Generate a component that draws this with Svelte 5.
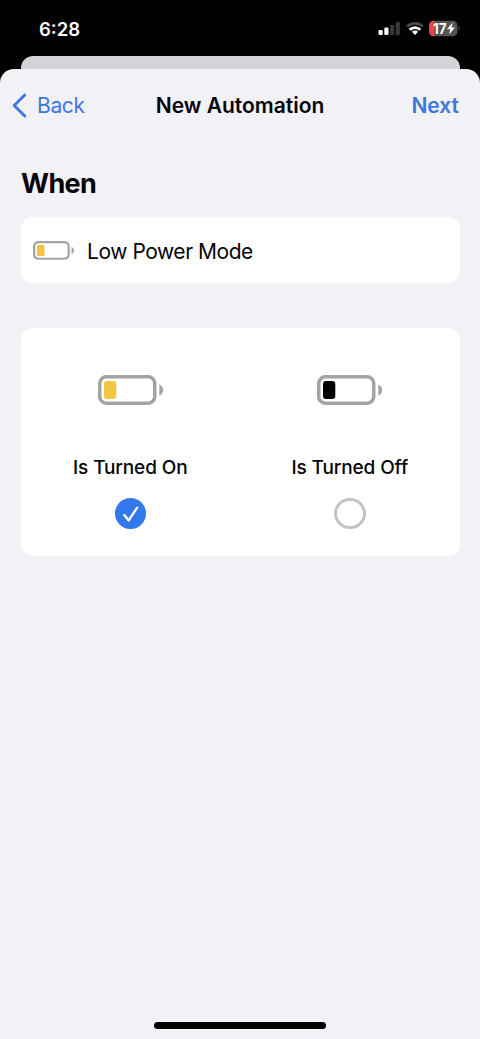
<script lang="ts">
    const options = [
        { label: 'Is Turned On', level: '#f2c643' },
        { label: 'Is Turned Off', level: '#000000' }
    ];
    let selected = $state(0);
</script>

{#snippet battery(level: string)}
    <svg class="battery" viewBox="0 0 66 30" fill="none">
        <rect x="1.75" y="1.75" width="55" height="26.5" rx="6.6" stroke="#a3a3a4" stroke-width="3.5" />
        <rect x="6" y="6" width="12.3" height="18" rx="3" fill={level} />
        <path d="M61.3 9.4C63.8 10.3 65.2 12.5 65.2 15s-1.4 4.7-3.9 5.6Z" fill="#a3a3a4" />
    </svg>
{/snippet}

<div class="phone">
    <header class="status">
        <span class="time">6:28</span>
        <svg class="indicators" viewBox="0 0 84 20" fill="none">
            <g fill="#ffffff">
                <rect x="2.5" y="12" width="4.2" height="5" rx="1.1" />
                <rect x="8.3" y="9.6" width="4.2" height="7.4" rx="1.1" />
                <rect x="14.1" y="6.9" width="4.2" height="10.1" rx="1.1" fill="#39393b" />
                <rect x="19.7" y="4" width="4.2" height="13" rx="1.1" fill="#39393b" />
            </g>
            <path d="M31.2 8.5a11.4 11.4 0 0 1 15.6 0" stroke="#4a4a4c" stroke-width="2.7" />
            <path d="M33.7 11.8a7.6 7.6 0 0 1 10.6 0" stroke="#ffffff" stroke-width="2.9" />
            <path d="M36 13.8a4.2 4.2 0 0 1 6 0L39 16.9Z" fill="#ffffff" />
            <rect x="53.2" y="2.7" width="28.2" height="15.6" rx="4.6" fill="#545456" />
            <path d="M58.6 2.7h-.8a4.6 4.6 0 0 0-4.6 4.6v6.4a4.6 4.6 0 0 0 4.6 4.6h.8Z" fill="#e5484a" />
            <path d="M82.6 8.2c1.5.6 1.5 4 0 4.6Z" fill="#545456" />
            <text x="57" y="15.6" textLength="13.6" lengthAdjust="spacingAndGlyphs">17</text>
            <path d="m76.8 4.6-6 6.7h3.6l-1.4 5.2 6.1-6.9h-3.6Z" fill="#ffffff" />
        </svg>
    </header>

    <div class="sheet-behind"></div>

    <main class="sheet">
        <nav>
            <button class="back">
                <svg class="chevron" viewBox="0 0 15 25" fill="none">
                    <path d="M12.8 2 2.2 12.5 12.8 23" stroke="#3b78e0" stroke-width="2.9" stroke-linecap="round" stroke-linejoin="round" />
                </svg>
                <span class="back-label">Back</span>
            </button>
            <h1>New Automation</h1>
            <button class="next">Next</button>
        </nav>

        <h2>When</h2>

        <section class="card trigger">
            <div class="trigger-icon">{@render battery('#f2c643')}</div>
            <span class="trigger-label">Low Power Mode</span>
        </section>

        <section class="card options">
            {#each options as option, i}
                <button class="option" onclick={() => (selected = i)}>
                    <div class="option-icon">{@render battery(option.level)}</div>
                    <span class="option-label">{option.label}</span>
                    <span class="radio" class:checked={selected === i}>
                        {#if selected === i}
                            <svg viewBox="0 0 32 32" fill="none">
                                <path d="m9.4 17.2 4.5 5.6 8.6-13" stroke="#ffffff" stroke-width="2.4" stroke-linecap="round" stroke-linejoin="round" />
                            </svg>
                        {/if}
                    </span>
                </button>
            {/each}
        </section>

        <div class="home-indicator"></div>
    </main>
</div>

<style>
    :global(body) {
        margin: 0;
        background: #000000;
    }

    .phone {
        width: 480px;
        height: 1039px;
        display: flex;
        flex-direction: column;
        overflow: hidden;
        background: #000000;
        color: #050506;
        font-family: Inter, 'Liberation Sans', sans-serif;
    }

    button {
        padding: 0;
        border: none;
        background: none;
        color: inherit;
        font: inherit;
        cursor: pointer;
    }

    svg {
        display: block;
        overflow: visible;
    }

    h1,
    h2 {
        margin: 0;
    }

    .status {
        box-sizing: border-box;
        height: 56px;
        padding: 18px 20px 0 39px;
        display: flex;
        justify-content: space-between;
        color: #ffffff;
    }

    .time {
        font-size: 18.5px;
        font-weight: 600;
        line-height: 22px;
    }

    .indicators {
        width: 84px;
        height: 20px;
    }

    .indicators text {
        fill: #ffffff;
        font-size: 14px;
        font-weight: 700;
    }

    .sheet-behind {
        height: 13px;
        margin: 0 20.5px;
        border-radius: 12px 12px 0 0;
        background: #d4d4d8;
    }

    .sheet {
        flex: 1;
        display: flex;
        flex-direction: column;
        border-radius: 14px 14px 0 0;
        background: #f1f1f6;
    }

    nav {
        height: 72px;
        padding: 0 21px 0 11.5px;
        display: grid;
        grid-template-columns: 120.5px 1fr 111px;
        align-items: center;
        font-size: 21px;
    }

    .back {
        display: flex;
        align-items: center;
        gap: 10.5px;
        color: #3b78e0;
        letter-spacing: -0.35px;
    }

    .chevron {
        width: 15px;
        height: 25px;
    }

    h1 {
        text-align: center;
        white-space: nowrap;
        font-size: 21px;
        font-weight: 600;
    }

    .next {
        text-align: right;
        color: #3b78e0;
        font-weight: 600;
    }

    h2 {
        height: 76px;
        padding-left: 21px;
        line-height: 85px;
        font-size: 27px;
        font-weight: 700;
        letter-spacing: -0.6px;
    }

    .card {
        margin: 0 20.5px;
        border-radius: 12px;
        background: #ffffff;
    }

    .trigger {
        height: 66px;
        display: flex;
        align-items: center;
        gap: 12.5px;
        padding-left: 12.5px;
    }

    .trigger-icon {
        width: 41.5px;
    }

    .trigger-label {
        padding-top: 2px;
        font-size: 21px;
        letter-spacing: -0.45px;
    }

    .options {
        height: 228px;
        margin-top: 45px;
        display: grid;
        grid-template-columns: 1fr 1fr;
    }

    .option {
        display: flex;
        flex-direction: column;
        align-items: center;
    }

    .option-icon {
        width: 66px;
        margin: 47px 0 0 1px;
    }

    .option-label {
        margin-top: 50px;
        font-size: 19px;
        font-weight: 500;
        line-height: 26px;
        letter-spacing: -0.12px;
    }

    .radio {
        box-sizing: border-box;
        width: 31.5px;
        height: 31.5px;
        margin-top: 16.5px;
        border: 3px solid #c4c4c6;
        border-radius: 50%;
    }

    .radio.checked {
        border: none;
        background: #3478ee;
    }

    .home-indicator {
        width: 172px;
        height: 7px;
        margin: auto auto 10px;
        border-radius: 4px;
        background: #000000;
    }
</style>
